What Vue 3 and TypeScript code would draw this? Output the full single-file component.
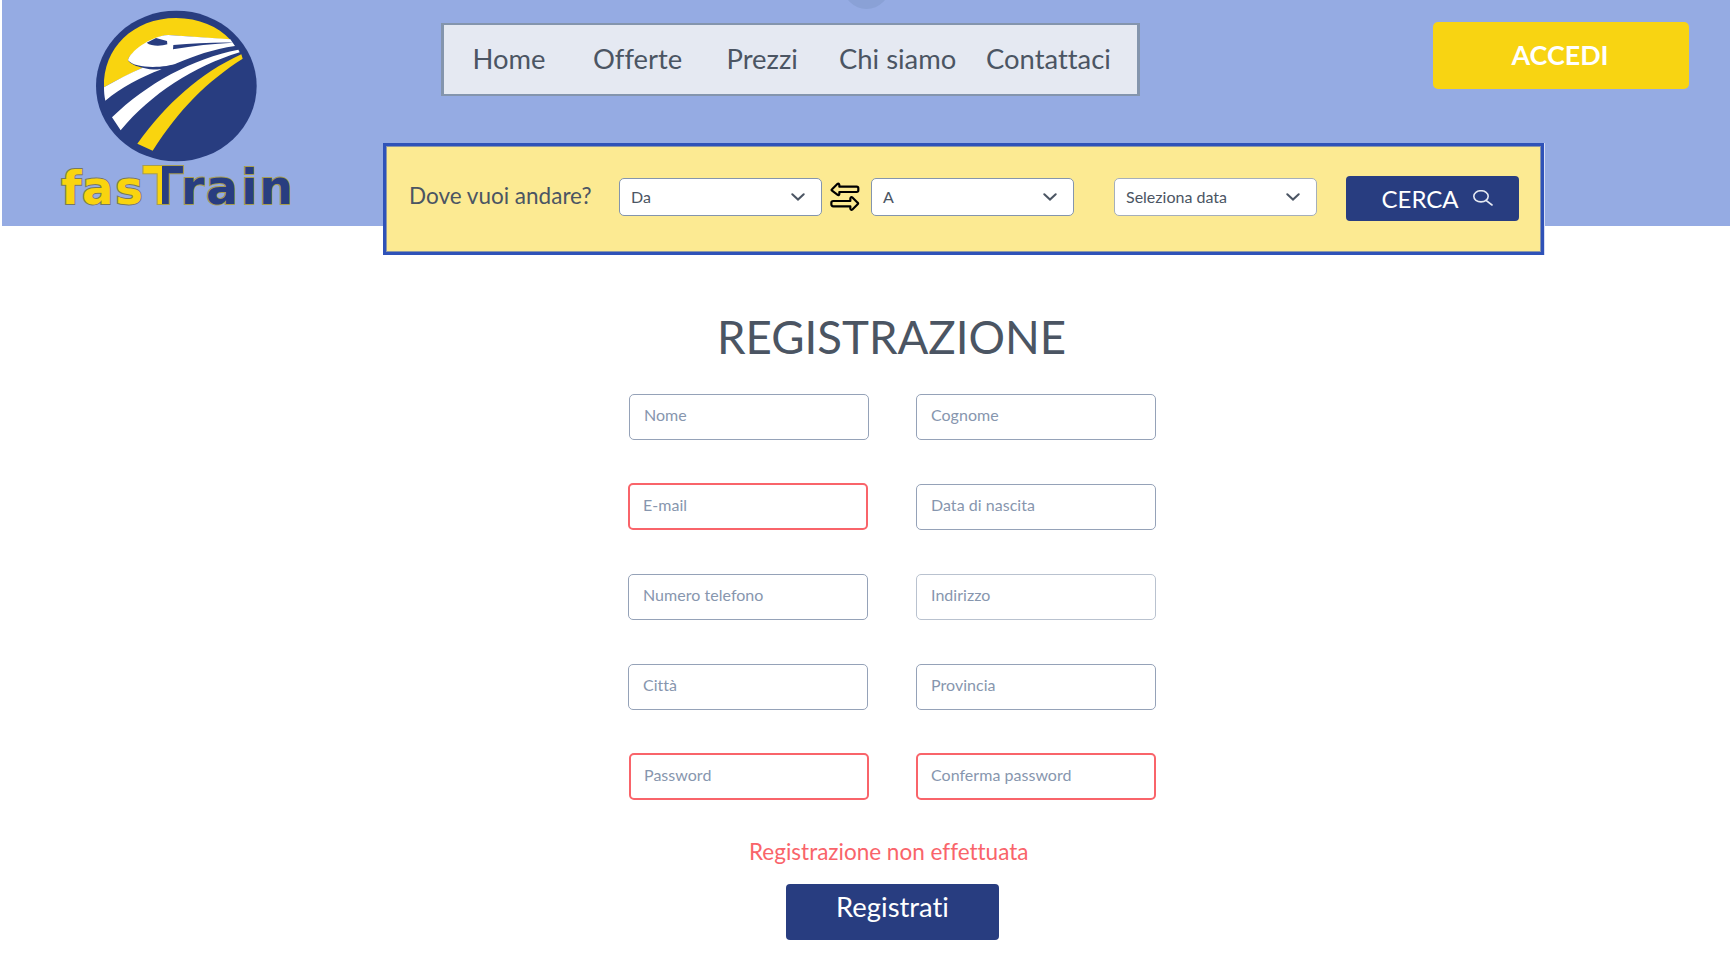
<script setup lang="ts">
interface Field {
  label: string
  error?: boolean
  shift?: boolean
  soft?: boolean
}

const navItems: string[] = ['Home', 'Offerte', 'Prezzi', 'Chi siamo', 'Contattaci']

const fields: Field[] = [
  { label: 'Nome' },
  { label: 'Cognome' },
  { label: 'E-mail', error: true, shift: true },
  { label: 'Data di nascita' },
  { label: 'Numero telefono', shift: true },
  { label: 'Indirizzo', soft: true },
  { label: 'Città', shift: true },
  { label: 'Provincia' },
  { label: 'Password', error: true },
  { label: 'Conferma password', error: true },
]
</script>

<template>
  <div class="page">
    <header class="header">
      <svg class="logo" viewBox="0 0 1020 678" role="img" aria-label="fasTrain">
        <defs>
          <linearGradient id="split" gradientUnits="userSpaceOnUse" x1="432" y1="0" x2="549" y2="0">
            <stop offset="0.47" stop-color="#f9d40f" />
            <stop offset="0.47" stop-color="#283d80" />
          </linearGradient>
        </defs>
        <ellipse cx="529" cy="258" rx="241" ry="226" fill="#283d80" />
        <path d="M312 262C308 145 400 54 528 54C596 54 655 80 691 119L505 105C460 108 385 160 384 181C392 193 410 200 428 203C390 221 350 240 312 262Z" fill="#f9d40f" />
        <path d="M384 181C388 157 450 108 505 105L691 118L705 138C640 146 580 170 532 189C495 205 405 207 384 181Z" fill="#fff" />
        <path d="M440 128L468 114L501 123L502 133C485 138 455 140 440 128Z" fill="#283d80" />
        <path d="M520 135C580 130 640 127 699 128C640 131 580 137 519 148Z" fill="#283d80" />
        <path d="M312 262C350 240 390 219 428 203C445 208 465 209 485 208C420 232 365 263 316 302C313 288 312 276 312 262Z" fill="#fff" />
        <path d="M336 352C440 250 580 175 715 149L719 157C580 200 455 280 362 391Z" fill="#fff" />
        <path d="M412 431C500 310 600 220 724 163L728 176C620 245 540 325 458 452Z" fill="#f9d40f" />
        <g class="wordmark">
          <text x="184 246 346" y="612" font-size="139" fill="#f9d40f" stroke="#77795f">fas</text>
          <text x="430" y="612" font-size="156" textLength="120" lengthAdjust="spacingAndGlyphs" fill="url(#split)" stroke="#a79d50">T</text>
          <text x="543 618 724 778" y="612" font-size="142" fill="#283d80" stroke="#a79d50">rain</text>
        </g>
      </svg>
      <span class="notch"></span>
      <nav class="nav">
        <a v-for="item in navItems" :key="item">{{ item }}</a>
      </nav>
      <button class="login" type="button">ACCEDI</button>
    </header>

    <section class="search">
      <span class="question">Dove vuoi andare?</span>
      <div class="select from">
        <span>Da</span>
        <svg class="chevron" viewBox="0 0 14 8"><path d="M1.3 1.2L7 6.6L12.7 1.2" /></svg>
      </div>
      <svg class="swap" viewBox="0 0 90 88">
        <path d="M6 22L22 6Q27 3 28 9V14H80Q85 14 85 19V25Q85 30 80 30H28V36Q27 42 22 38L6 26Q3 24 6 22Z" />
        <path d="M83 62L68 47Q62 43 61 50V57H10Q4 57 4 62V67Q4 73 10 73H61V80Q62 86 68 82L83 67Q86 64 83 62Z" />
      </svg>
      <div class="select to">
        <span>A</span>
        <svg class="chevron" viewBox="0 0 14 8"><path d="M1.3 1.2L7 6.6L12.7 1.2" /></svg>
      </div>
      <div class="select date">
        <span>Seleziona data</span>
        <svg class="chevron" viewBox="0 0 14 8"><path d="M1.3 1.2L7 6.6L12.7 1.2" /></svg>
      </div>
      <button class="find" type="button">
        <span>CERCA</span>
        <svg class="lens" viewBox="0 0 20 16"><ellipse cx="8" cy="6.3" rx="7.2" ry="5.6" /><path d="M13 10.3L19 15" /></svg>
      </button>
    </section>

    <main class="register">
      <h1>REGISTRAZIONE</h1>
      <form class="fields">
        <div
          v-for="field in fields"
          :key="field.label"
          class="field"
          :class="{ error: field.error, shift: field.shift, soft: field.soft }"
        >
          {{ field.label }}
        </div>
      </form>
      <p class="message">Registrazione non effettuata</p>
      <button class="submit" type="button">Registrati</button>
    </main>
  </div>
</template>

<style>
body {
  background: #fff;
}
</style>

<style scoped>
.page {
  box-sizing: border-box;
  width: 1733px;
  height: 973px;
  overflow: hidden;
  background: #fff;
  color: #4b5563;
  font-family: Lato, 'Liberation Sans', sans-serif;
  font-variant-ligatures: none;
}
.page * {
  box-sizing: border-box;
}
button {
  padding: 0;
  border: 0;
  font-family: inherit;
  font-variant-ligatures: none;
}
.header {
  position: relative;
  display: flex;
  align-items: flex-start;
  width: 1728px;
  height: 226px;
  margin-left: 2px;
  background: #95abe3;
}
.logo {
  flex: none;
  width: 340px;
  height: 226px;
  margin-left: -2px;
}
.wordmark {
  font-family: 'DejaVu Sans', sans-serif;
  font-weight: 700;
  stroke-width: 6px;
  paint-order: stroke;
}
.notch {
  position: absolute;
  left: 841px;
  top: -38px;
  width: 47px;
  height: 47px;
  border-radius: 50%;
  background: #8aa1d6;
}
.nav {
  display: grid;
  grid-template-columns: 120.5px 133.5px 112.5px 147px auto;
  align-items: center;
  width: 699px;
  height: 73px;
  margin: 23px 0 0 101px;
  padding: 0 0 2px 28.5px;
  border: 3px solid #8495ad;
  border-width: 2px 3px;
  background: #e5e9f2;
  font-size: 27.4px;
  line-height: 36px;
  white-space: nowrap;
}
.login {
  width: 256px;
  height: 67px;
  margin: 22px 0 0 293px;
  padding: 0 2px 1px 0;
  border-radius: 5px;
  background: #f8d412;
  color: #fff;
  font-size: 26.9px;
  font-weight: 700;
  line-height: 66px;
}
.search {
  position: relative;
  display: flex;
  align-items: flex-start;
  width: 1161px;
  height: 112px;
  margin: -83px 0 0 383px;
  border: 3px solid #2f52b8;
  background: #fcea92;
  box-shadow: inset 0 0 0 1px rgba(47, 82, 184, 0.55), 1px 0 0 #d5ddf3;
}
.question {
  width: 210px;
  margin: 32px 0 0 23px;
  font-size: 22.5px;
  line-height: 36px;
  white-space: nowrap;
}
.select {
  display: flex;
  align-items: center;
  justify-content: space-between;
  width: 203px;
  height: 38px;
  margin-top: 32px;
  padding: 0 16px 0 11px;
  border: 1px solid #8495ad;
  border-radius: 5px;
  background: #fff;
  font-size: 16px;
  line-height: 18px;
}
.from,
.to {
  padding-bottom: 1px;
}
.date {
  margin: 31.5px 0 0 40px;
  border-color: #a5afba;
}
.chevron {
  width: 14px;
  height: 8px;
  fill: none;
  stroke: #4b5563;
  stroke-width: 2;
  stroke-linecap: round;
}
.swap {
  width: 30px;
  height: 29.3px;
  margin: 35.5px 11.5px 0 7.5px;
  fill: none;
  stroke: #000;
  stroke-width: 6.5;
  stroke-linejoin: round;
}
.find {
  display: flex;
  align-items: center;
  width: 173px;
  height: 45px;
  margin: 29.5px 0 0 29px;
  padding-left: 35.5px;
  border-radius: 4px;
  background: #283d80;
  color: #fff;
  font-size: 24px;
}
.lens {
  width: 20px;
  height: 16px;
  margin: 0 0 0 14px;
  fill: none;
  stroke: #e5e9f2;
  stroke-width: 1.6;
  stroke-linecap: round;
}
.register {
  display: flex;
  flex-direction: column;
  align-items: flex-start;
}
h1 {
  margin: 55px 0 0 717px;
  font-size: 45.6px;
  font-weight: 400;
  line-height: 54px;
  white-space: nowrap;
}
.fields {
  display: grid;
  grid-template-columns: 240px 240px;
  grid-auto-rows: 46px;
  gap: 44px 47px;
  margin: 30px 0 0 629px;
}
.field {
  padding-left: 14px;
  border: 1px solid #95a2b8;
  border-radius: 5px;
  background: #fff;
  color: #8796ae;
  font-size: 16px;
  line-height: 40px;
  letter-spacing: 0.03px;
  white-space: nowrap;
}
.shift {
  margin-right: 1px;
  margin-left: -1px;
}
.error {
  margin-top: -1px;
  padding-left: 13px;
  border: 2px solid #f9646a;
}
.soft {
  border-color: #b9c2cf;
}
.message {
  margin: 37px 0 0 749px;
  color: #f9646a;
  font-size: 22.5px;
  line-height: 30px;
  white-space: nowrap;
}
.submit {
  width: 213px;
  height: 56px;
  margin: 17px 0 0 786px;
  padding: 0 0 11px;
  border-radius: 4px;
  background: #283d80;
  color: #fff;
  font-size: 27.4px;
  line-height: 36px;
}
</style>
